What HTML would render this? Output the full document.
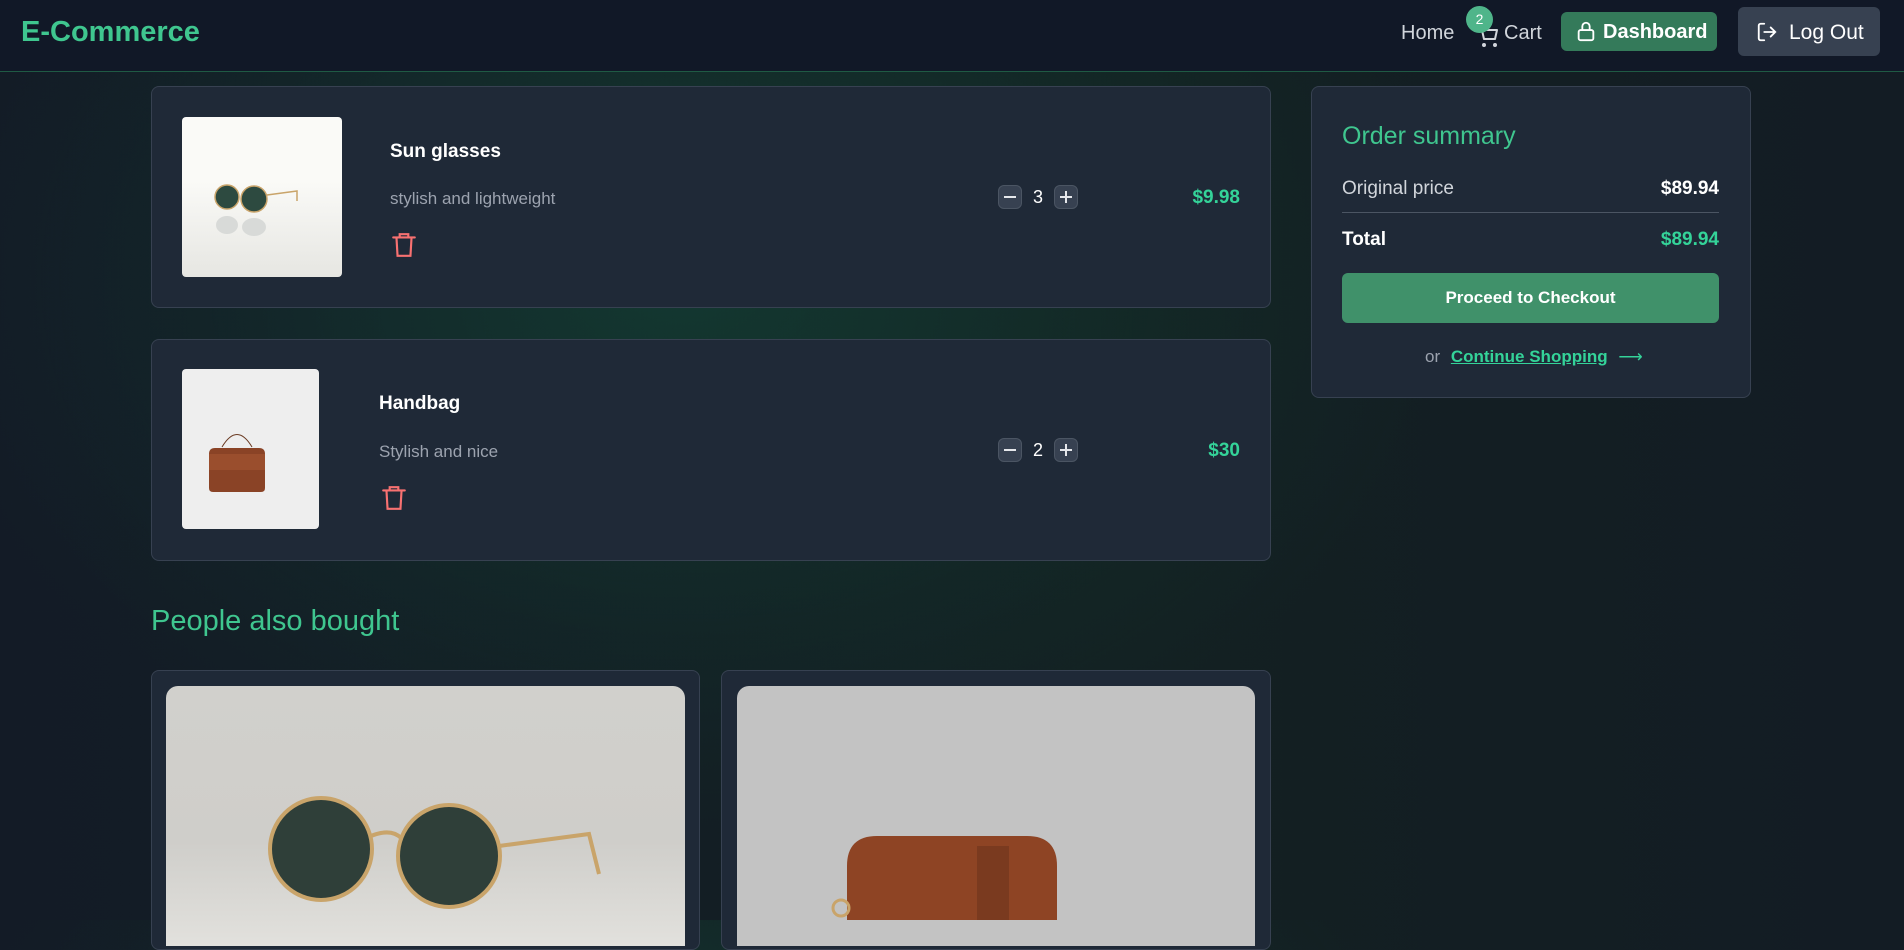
<!DOCTYPE html>
<html><head><meta charset="utf-8"><style>
*{box-sizing:border-box;margin:0;padding:0}
body{width:1904px;height:920px;overflow:hidden;font-family:"Liberation Sans",sans-serif;color:#fff;
background:radial-gradient(ellipse 900px 650px at 680px 280px,rgba(20,110,75,0.32),rgba(16,90,62,0.12) 55%,transparent 85%),linear-gradient(90deg,#131b26,#132022 60%,#131c24);position:relative}
.nav{position:absolute;left:0;top:0;width:1904px;height:72px;background:#111827;border-bottom:1px solid #1f5a44;}
.logo{position:absolute;left:21px;top:16px;font-size:29px;font-weight:bold;color:#3fc68f}
.abs{position:absolute}
.card{position:absolute;background:#1f2937;border:1px solid #374151;border-radius:8px}
.qb{position:absolute;width:24px;height:24px;background:#374151;border:1px solid #4b5563;border-radius:6px}
</style></head><body>
<div class="nav">
<div class="logo">E-Commerce</div>
<div class="abs" style="left:1401px;top:22px;font-size:20px;color:#d1d5db">Home</div>
<svg class="abs" style="left:1476px;top:24px" width="24" height="24" viewBox="0 0 24 24" fill="none" stroke="#d1d5db" stroke-width="2" stroke-linecap="round" stroke-linejoin="round"><circle cx="8" cy="21" r="1"/><circle cx="19" cy="21" r="1"/><path d="M2 2h3l3 13h11l2-9H6"/></svg>
<div class="abs" style="left:1504px;top:22px;font-size:20px;color:#d1d5db">Cart</div>
<div class="abs" style="left:1466px;top:6px;width:27px;height:27px;border-radius:50%;background:#4fb58a;font-size:14px;text-align:center;line-height:27px;color:#fff">2</div>
<div class="abs" style="left:1561px;top:12px;width:156px;height:39px;background:#347a5a;border-radius:6px"></div>
<svg class="abs" style="left:1575px;top:20px" width="22" height="22" viewBox="0 0 24 24" fill="none" stroke="#fff" stroke-width="2"><rect x="4" y="11" width="16" height="11" rx="2"/><path d="M8 11V7a4 4 0 0 1 8 0v4"/></svg>
<div class="abs" style="left:1603px;top:21px;font-size:20px;font-weight:bold">Dashboard</div>
<div class="abs" style="left:1738px;top:7px;width:142px;height:49px;background:#374151;border-radius:6px"></div>
<svg class="abs" style="left:1756px;top:21px" width="22" height="22" viewBox="0 0 24 24" fill="none" stroke="#fff" stroke-width="2" stroke-linecap="round"><path d="M9 21H5a2 2 0 0 1-2-2V5a2 2 0 0 1 2-2h4M16 17l5-5-5-5M21 12H9"/></svg>
<div class="abs" style="left:1789px;top:21px;font-size:21px">Log Out</div>
</div>

<div class="card" style="left:151px;top:86px;width:1120px;height:222px"></div>
<div class="abs" style="left:182px;top:117px;width:160px;height:160px;border-radius:4px;background:linear-gradient(#fafaf7 40%,#e6e6e2)"></div>
<svg class="abs" style="left:182px;top:117px" width="160" height="160"><ellipse cx="45" cy="80" rx="12" ry="12" fill="#2d4a40" stroke="#c9a46a" stroke-width="1.5"/><ellipse cx="72" cy="82" rx="13" ry="13" fill="#2d4a40" stroke="#c9a46a" stroke-width="1.5"/><path d="M85 78l30-4 0 10" stroke="#c9a46a" fill="none" stroke-width="1.5"/><ellipse cx="45" cy="108" rx="11" ry="9" fill="#d8dad8"/><ellipse cx="72" cy="110" rx="12" ry="9" fill="#d8dad8"/></svg>
<div class="abs" style="left:390px;top:141px;font-size:19px;font-weight:bold">Sun glasses</div>
<div class="abs" style="left:390px;top:189px;font-size:17px;color:#9ca3af">stylish and lightweight</div>
<svg class="abs" style="left:391px;top:231px" width="26" height="28" viewBox="0 0 24 26" fill="none" stroke="#f87171" stroke-width="2" stroke-linecap="round"><path d="M2 6h20M8 6V3h8v3M5 6l1 17h12l1-17"/></svg>
<div class="qb" style="left:998px;top:185px"><div style="position:absolute;left:5px;top:10px;width:12px;height:2px;background:#e5e7eb"></div></div>
<div class="abs" style="left:1033px;top:187px;font-size:18px">3</div>
<div class="qb" style="left:1054px;top:185px"><div style="position:absolute;left:5px;top:10px;width:12px;height:2px;background:#e5e7eb"></div><div style="position:absolute;left:10px;top:5px;width:2px;height:12px;background:#e5e7eb"></div></div>
<div class="abs" style="left:1140px;top:187px;width:100px;text-align:right;font-size:19px;font-weight:bold;color:#34d399">$9.98</div>

<div class="card" style="left:151px;top:339px;width:1120px;height:222px"></div>
<div class="abs" style="left:182px;top:369px;width:137px;height:160px;border-radius:4px;background:#eeeeee"></div>
<svg class="abs" style="left:182px;top:369px" width="137" height="160"><path d="M27 85q0-6 6-6h44q6 0 6 6v34q0 4-4 4H31q-4 0-4-4z" fill="#8a4326"/><path d="M27 85h56v16H27z" fill="#9a4e2d"/><path d="M40 78q15-25 30 0" stroke="#6a3a22" fill="none"/></svg>
<div class="abs" style="left:379px;top:393px;font-size:19px;font-weight:bold">Handbag</div>
<div class="abs" style="left:379px;top:442px;font-size:17px;color:#9ca3af">Stylish and nice</div>
<svg class="abs" style="left:381px;top:484px" width="26" height="28" viewBox="0 0 24 26" fill="none" stroke="#f87171" stroke-width="2" stroke-linecap="round"><path d="M2 6h20M8 6V3h8v3M5 6l1 17h12l1-17"/></svg>
<div class="qb" style="left:998px;top:438px"><div style="position:absolute;left:5px;top:10px;width:12px;height:2px;background:#e5e7eb"></div></div>
<div class="abs" style="left:1033px;top:440px;font-size:18px">2</div>
<div class="qb" style="left:1054px;top:438px"><div style="position:absolute;left:5px;top:10px;width:12px;height:2px;background:#e5e7eb"></div><div style="position:absolute;left:10px;top:5px;width:2px;height:12px;background:#e5e7eb"></div></div>
<div class="abs" style="left:1140px;top:440px;width:100px;text-align:right;font-size:19px;font-weight:bold;color:#34d399">$30</div>

<div class="card" style="left:1311px;top:86px;width:440px;height:312px"></div>
<div class="abs" style="left:1342px;top:122px;font-size:25px;color:#3fc68f">Order summary</div>
<div class="abs" style="left:1342px;top:178px;font-size:19px;color:#d1d5db">Original price</div>
<div class="abs" style="left:1600px;top:178px;width:119px;text-align:right;font-size:19px;font-weight:bold">$89.94</div>
<div class="abs" style="left:1342px;top:212px;width:377px;height:1px;background:#4b5563"></div>
<div class="abs" style="left:1342px;top:229px;font-size:19px;font-weight:bold">Total</div>
<div class="abs" style="left:1600px;top:229px;width:119px;text-align:right;font-size:19px;font-weight:bold;color:#34d399">$89.94</div>
<div class="abs" style="left:1342px;top:273px;width:377px;height:50px;background:#40916a;border-radius:6px;text-align:center;line-height:50px;font-size:17px;font-weight:bold">Proceed to Checkout</div>
<div class="abs" style="left:1425px;top:347px;font-size:17px;color:#9ca3af">or <span style="color:#34d399;text-decoration:underline;font-weight:bold;margin-left:6px">Continue Shopping</span> <span style="color:#34d399;margin-left:6px">⟶</span></div>

<div class="abs" style="left:151px;top:605px;font-size:29px;color:#3fc68f">People also bought</div>
<div class="card" style="left:151px;top:670px;width:549px;height:280px"></div>
<div class="abs" style="left:166px;top:686px;width:519px;height:260px;border-radius:12px 12px 0 0;background:linear-gradient(#d1d0cc,#cfceca 60%,#e2e1dd)"></div>
<svg class="abs" style="left:166px;top:686px" width="519" height="234"><circle cx="155" cy="163" r="51" fill="#2f3f39" stroke="#c9a46a" stroke-width="4"/><circle cx="283" cy="170" r="51" fill="#2f3f39" stroke="#c9a46a" stroke-width="4"/><path d="M205 150q20-8 30 2M333 160l90-12 10 40" stroke="#c9a46a" stroke-width="4" fill="none"/></svg>
<div class="card" style="left:721px;top:670px;width:550px;height:280px"></div>
<div class="abs" style="left:737px;top:686px;width:518px;height:260px;border-radius:12px 12px 0 0;background:#c3c3c3"></div>
<svg class="abs" style="left:737px;top:686px" width="518" height="234"><path d="M110 180q0-30 30-30h150q30 0 30 30v60H110z" fill="#8e4424"/><rect x="240" y="160" width="32" height="80" fill="#7a3a1f"/><circle cx="104" cy="222" r="8" fill="none" stroke="#c9a46a" stroke-width="3"/></svg>
</body></html>
